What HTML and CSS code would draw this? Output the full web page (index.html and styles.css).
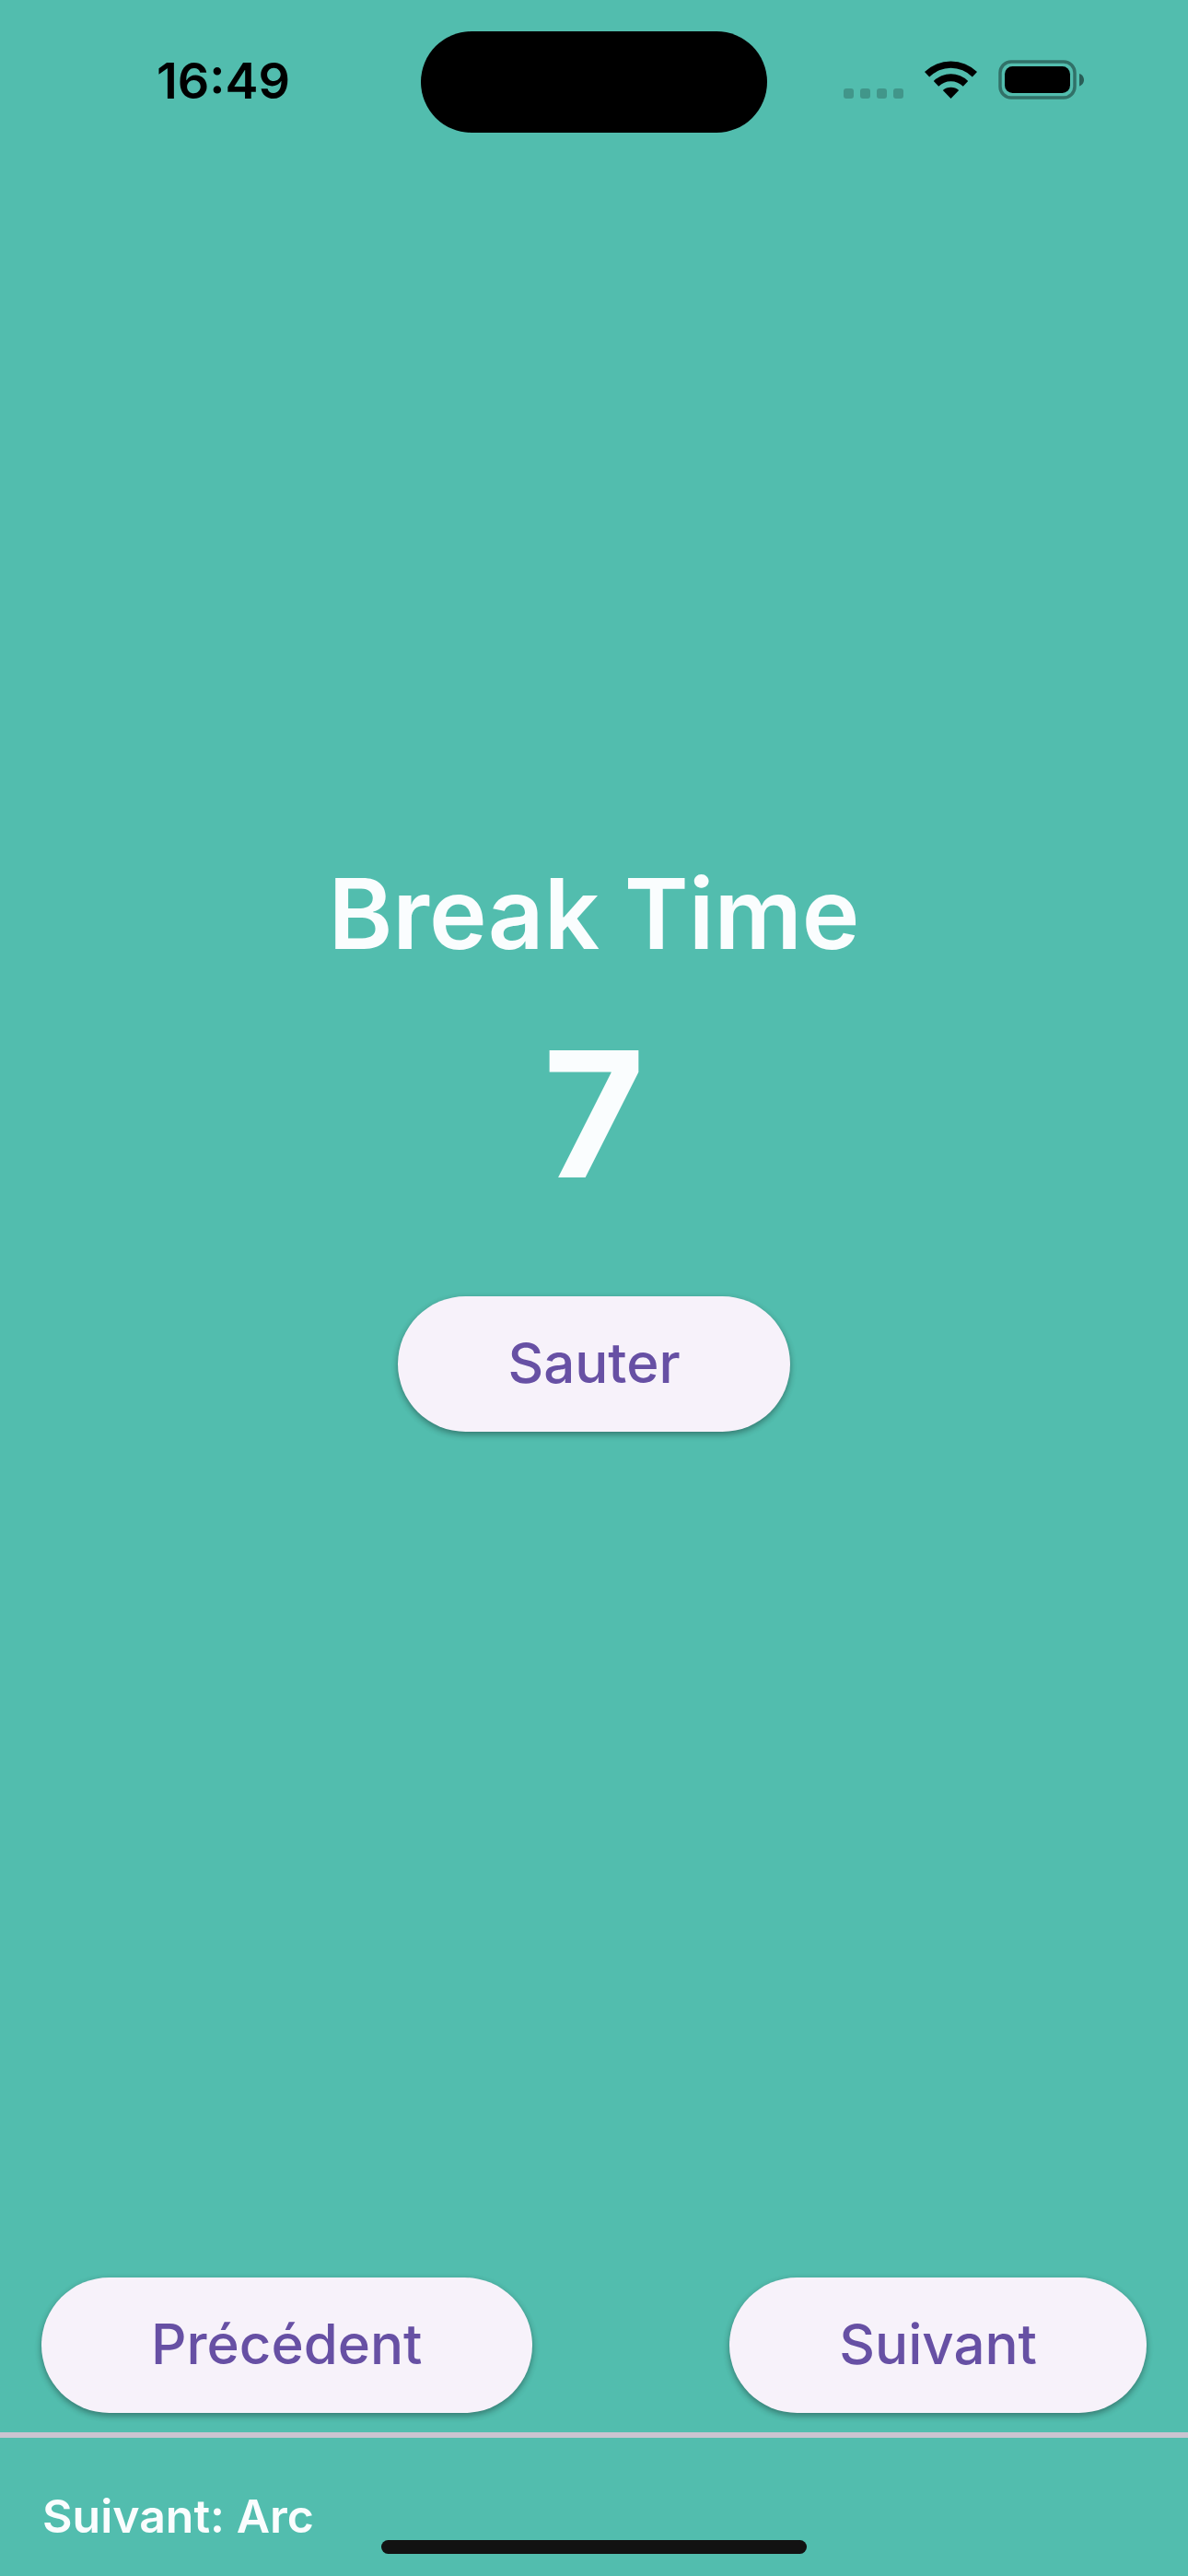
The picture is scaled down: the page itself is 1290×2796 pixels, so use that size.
FILE: index.html
```html
<!DOCTYPE html>
<html lang="fr">
<head>
<meta charset="utf-8">
<meta name="viewport" content="width=device-width, initial-scale=1">
<title>Break Time</title>
<link rel="stylesheet" href="styles.css">
</head>
<body>
<div class="screen">
  <header class="status-bar">
    <time class="clock">16:49</time>
    <div class="island"></div>
    <div class="status-icons">
      <svg class="icon-signal" width="66" height="44" viewBox="0 0 66 44" aria-hidden="true">
        <rect x="0" y="31" width="11" height="11" rx="3"/>
        <rect x="18" y="31" width="11" height="11" rx="3"/>
        <rect x="36" y="31" width="11" height="11" rx="3"/>
        <rect x="54" y="31" width="11" height="11" rx="3"/>
      </svg>
      <svg class="icon-wifi" width="58" height="44" viewBox="0 0 58 44" aria-hidden="true">
        <path d="M0 13 A41 41 0 0 1 57 13 L51.800 18.500 A33 33 0 0 0 5.200 18.500 Z"/>
        <path d="M9.800 23 A26.500 26.500 0 0 1 47.200 23 L41.800 28.700 A19 19 0 0 0 15.200 28.700 Z"/>
        <path d="M19.800 33 A13.500 13.500 0 0 1 37.200 33 L28.500 42 Z"/>
      </svg>
      <svg class="icon-battery" width="94" height="44" viewBox="0 0 94 44" aria-hidden="true">
        <rect x="2" y="2" width="81" height="39" rx="12" fill="none" stroke="#000" stroke-opacity=".4" stroke-width="3.500"/>
        <rect x="7" y="7" width="71" height="29" rx="8.500"/>
        <path d="M88 15 C91.500 16 93 19 93 21.800 C93 24.500 91.500 27.500 88 28.500 Z" fill-opacity=".5"/>
      </svg>
    </div>
  </header>

  <main class="break">
    <h1 class="break-title">Break Time</h1>
    <p class="break-count" role="timer">7</p>
    <button class="button" type="button">Sauter</button>
  </main>

  <nav class="pager">
    <button class="button" type="button">Précédent</button>
    <button class="button" type="button">Suivant</button>
  </nav>

  <footer class="next">
    <p class="next-label">Suivant: Arc</p>
    <div class="home-indicator"></div>
  </footer>
</div>
</body>
</html>
```
FILE: styles.css
```css
* {
  box-sizing: border-box;
}

body {
  margin: 0;
  background: #52bdae;
  color: #fafdfe;
  font-family: Inter, "Liberation Sans", sans-serif;
}

.screen {
  display: flex;
  flex-direction: column;
  min-height: 100vh;
}

.status-bar {
  display: grid;
  grid-template-columns: 1fr auto 1fr;
  align-items: center;
  padding-top: 34px;
  color: #000;
}

.clock {
  justify-self: center;
  padding: 0 0 2px 28px;
  font-size: 54px;
  font-weight: 600;
  line-height: 64px;
}

.island {
  width: 376px;
  height: 110px;
  border-radius: 55px;
  background: #000;
}

.status-icons {
  display: flex;
  justify-content: flex-end;
  gap: 22px;
  padding: 0 112px 4px 0;
}

.icon-signal {
  opacity: 0.2;
}

.break {
  display: flex;
  flex: 1;
  flex-direction: column;
  align-items: center;
  justify-content: center;
  padding-bottom: 130px;
}

.break-title {
  margin: 0;
  font-size: 106px;
  font-weight: 600;
  line-height: 120px;
}

.break-count {
  margin: 47px 0 88px;
  font-size: 190px;
  font-weight: 700;
  line-height: 220px;
}

.button {
  height: 147px;
  padding: 0 119px 4px;
  border: 0;
  border-radius: 74px;
  background: #f7f2fa;
  box-shadow: 0 3px 6px rgb(0 0 0 / 26%), 0 3px 9px rgb(0 0 0 / 12%);
  color: #6750a4;
  font: 500 60px/72px Inter, "Liberation Sans", sans-serif;
}

.pager {
  display: flex;
  justify-content: space-between;
  padding: 0 45px 21px;
}

.next {
  display: flex;
  flex-direction: column;
  padding-bottom: 24px;
  border-top: 6px solid #cac4d0;
}

.next-label {
  margin: 0;
  padding: 59px 46px 0;
  font-size: 50px;
  font-weight: 600;
  line-height: 52px;
}

.home-indicator {
  align-self: center;
  width: 462px;
  height: 15px;
  border-radius: 8px;
  background: #121212;
}
```
